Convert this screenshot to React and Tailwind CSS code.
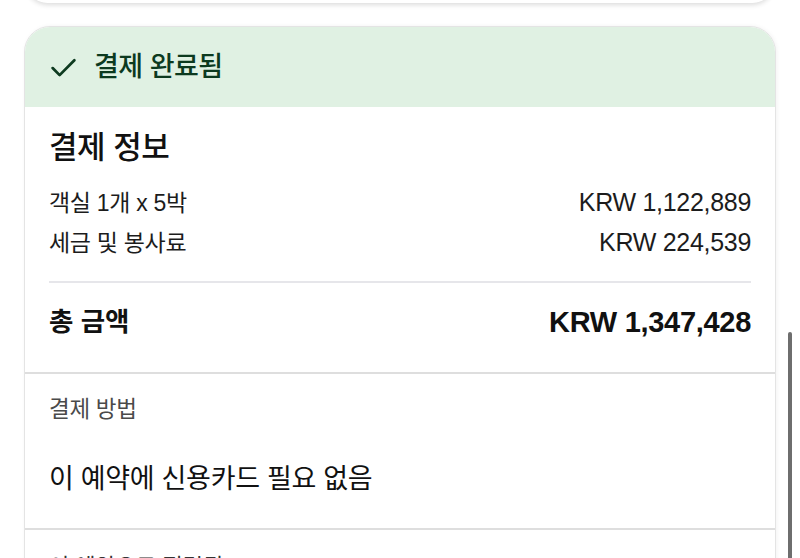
import React from 'react';

const font = { fontFamily: '"Liberation Sans", "Noto Sans CJK KR", sans-serif' };

function Check() {
  return (
    <svg viewBox="0 0 24 24" className="w-[29px] h-[29px]" fill="none" stroke="#0e3b20" strokeWidth="2.3" strokeLinecap="round" strokeLinejoin="round">
      <path d="M3 12.5l5.8 5.8L21 6" />
    </svg>
  );
}

function Row({ label, value }) {
  return (
    <div className="h-[40px] flex items-center justify-between">
      <span className="text-[23px] text-[#1c1c1c] tracking-[-0.3px]">{label}</span>
      <span className="text-[25px] text-[#1c1c1c] tracking-[-0.3px]">{value}</span>
    </div>
  );
}

export default function App() {
  return (
    <div className="relative w-[800px] h-[558px] overflow-hidden bg-white" style={font}>
      {/* Previous card peeking in from the top */}
      <div className="mx-[26px] -mt-[40px] h-[43px] rounded-[24px] bg-white shadow-[0_2px_5px_rgba(0,0,0,0.14)]" />

      {/* Payment card */}
      <div className="mx-[24px] mt-[23px] rounded-t-[26px] border border-[#e4e4e4] bg-white shadow-[1px_0_4px_rgba(0,0,0,0.05)] overflow-hidden">
        <div className="h-[80px] bg-[#e0f1e3] flex items-center pl-[24px] gap-[16px]">
          <Check />
          <span className="text-[27px] font-medium text-[#0c3a1f] tracking-[-0.5px]">결제 완료됨</span>
        </div>

        <div className="px-[24px]">
          <div className="pt-[19px] h-[63px] flex items-center">
            <span className="text-[31px] font-medium text-[#111] tracking-[-0.5px]">결제 정보</span>
          </div>
          <div className="pt-[13px]">
            <Row label="객실 1개 x 5박" value="KRW 1,122,889" />
            <Row label="세금 및 봉사료" value="KRW 224,539" />
          </div>
          <div className="mt-[18px] h-[2px] bg-[#e6e6ea]" />
          <div className="pt-[15px] pb-[24px]">
            <div className="h-[50px] flex items-center justify-between">
              <span className="text-[26.5px] font-bold text-[#111]">총 금액</span>
              <span className="text-[29px] font-bold text-[#111] tracking-[-0.3px]">KRW 1,347,428</span>
            </div>
          </div>
        </div>

        <div className="h-[2px] bg-[#dedede]" />

        <div className="px-[24px] pt-[21px] pb-[31px]">
          <div className="h-[30px] flex items-center">
            <span className="text-[22.5px] text-[#4a4a4a] tracking-[-0.3px]">결제 방법</span>
          </div>
          <div className="mt-[36px] h-[36px] flex items-center">
            <span className="text-[27px] text-[#111] tracking-[-0.3px]">이 예약에 신용카드 필요 없음</span>
          </div>
        </div>

        <div className="h-[2px] bg-[#dedede]" />

        <div className="px-[24px] pt-[20px] pb-[40px]">
          <span className="text-[22px] text-[#333]">이 예약으로 적립된</span>
        </div>
      </div>

      {/* Scrollbar */}
      <div className="absolute left-[788px] top-[332px] w-[4px] h-[240px] rounded-full bg-[#6e6e6e]" />
    </div>
  );
}
